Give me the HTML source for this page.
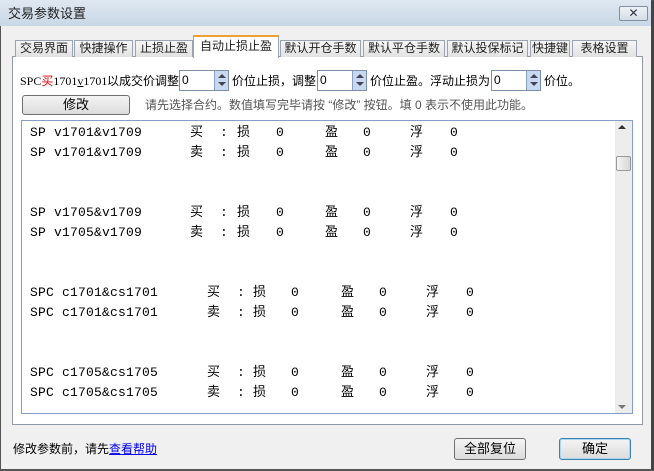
<!DOCTYPE html>
<html><head><meta charset="utf-8"><style>
*{margin:0;padding:0;box-sizing:border-box}
body{width:654px;height:471px;overflow:hidden;background:#f0f0f0;font-family:"Liberation Sans","Noto Sans CJK SC",sans-serif;font-size:12px;color:#000;position:relative}
.a{position:absolute;white-space:nowrap;line-height:16px}
.win{position:absolute;left:0;top:0;width:654px;height:471px;border:1px solid #555;border-right:3px solid #444;border-bottom:2px solid #555;background:#f0f0f0}
.title{position:absolute;left:0;top:0;width:651px;height:26px;background:linear-gradient(#dfe8f1,#c9d7e5)}
.tab{position:absolute;top:40px;height:17px;border:1px solid #9aa5b1;border-bottom:none;background:linear-gradient(#f6f6f6,#e2e2e2);font-size:12px;text-align:center;line-height:15px;color:#222;white-space:nowrap;overflow:hidden}
.panel{position:absolute;left:12px;top:56px;width:631px;height:369px;border:1px solid #8e9aa6;background:#fff}
.spin{position:absolute;top:70px;width:50px;height:21px;border:1px solid #7a8ea8;background:#fff;font-size:12px;line-height:19px;padding-left:2px}
.spin i{position:absolute;right:0;top:0;width:14px;height:19px;background:#c8d8f0;border-left:1px solid #8aa0c0}
.spin i:before{content:"";position:absolute;left:3px;top:3px;border:4px solid transparent;border-bottom:4px solid #445;border-top:none}
.spin i:after{content:"";position:absolute;left:3px;top:11px;border:4px solid transparent;border-top:4px solid #445;border-bottom:none}
.btn{position:absolute;border:1px solid #707070;border-radius:3px;background:linear-gradient(#f4f4f4,#dcdcdc);text-align:center;font-size:13px}
.m .a{font-family:"Liberation Mono","Noto Sans CJK SC",monospace;font-size:13px;letter-spacing:0.2px;line-height:16px;height:16px}
</style></head><body>
<div class="win"></div>
<div class="title"></div>
<div class="a" style="left:8px;top:6px;font-size:13px;color:#222">交易参数设置</div>
<div class="a" style="left:619px;top:6px;width:29px;height:15px;border:1px solid #7f8ea0;border-radius:2px;background:linear-gradient(#eef2f6,#d4dde7);text-align:center;font-size:12px;line-height:13px;color:#334">✕</div>

<div class="panel"></div>
<div class="tab" style="left:15px;width:58px">交易界面</div>
<div class="tab" style="left:74px;width:59px">快捷操作</div>
<div class="tab" style="left:135px;width:58px">止损止盈</div>
<div class="tab" style="left:280px;width:81px">默认开仓手数</div>
<div class="tab" style="left:363px;width:82px">默认平仓手数</div>
<div class="tab" style="left:447px;width:81px">默认投保标记</div>
<div class="tab" style="left:530px;width:40px">快捷键</div>
<div class="tab" style="left:572px;width:65px">表格设置</div>
<div class="tab" style="left:193px;top:35px;width:86px;height:23px;background:#fff;border-top:2px solid #f0a030;line-height:19px">自动止损止盈</div>

<div class="a" style="left:20px;top:73px;font-size:12px"><span style="font-family:'Liberation Serif',serif">SPC</span><span style="color:#e00000">买</span><span style="font-family:'Liberation Serif',serif">1701<u>v</u>1701</span></div>
<div class="a" style="left:107px;top:73px">以成交价调整</div>
<div class="spin" style="left:179px">0<i></i></div>
<div class="a" style="left:232px;top:73px">价位止损，调整</div>
<div class="spin" style="left:317px">0<i></i></div>
<div class="a" style="left:370px;top:73px">价位止盈。浮动止损为</div>
<div class="spin" style="left:491px">0<i></i></div>
<div class="a" style="left:544px;top:73px">价位。</div>
<div class="btn" style="left:22px;top:95px;width:108px;height:20px;line-height:18px">修改</div>
<div class="a" style="left:145px;top:97px;color:#555">请先选择合约。数值填写完毕请按 “修改” 按钮。填 0 表示不使用此功能。</div>

<div class="a" style="left:21px;top:120px;width:612px;height:294px;border:1px solid #84a0c4;background:#fff"></div>
<div class="a" style="left:615px;top:121px;width:17px;height:292px;background:#ededed"></div>
<div class="a" style="left:618px;top:125px;border:4px solid transparent;border-bottom:4px solid #333;border-top:none;height:0"></div>
<div class="a" style="left:618px;top:405px;border:4px solid transparent;border-top:4px solid #777;border-bottom:none;height:0"></div>
<div class="a" style="left:616px;top:156px;width:15px;height:15px;border:1px solid #999;border-radius:2px;background:linear-gradient(90deg,#f4f4f4,#d8d8d8)"></div>

<div class="m">
<div class="a" style="left:30px;top:125px">SP v1701&amp;v1709</div><div class="a" style="left:190px;top:125px">买</div><div class="a" style="left:220px;top:125px">:</div><div class="a" style="left:237px;top:125px">损</div><div class="a" style="left:276px;top:125px">0</div><div class="a" style="left:325px;top:125px">盈</div><div class="a" style="left:363px;top:125px">0</div><div class="a" style="left:410px;top:125px">浮</div><div class="a" style="left:450px;top:125px">0</div>
<div class="a" style="left:30px;top:145px">SP v1701&amp;v1709</div><div class="a" style="left:190px;top:145px">卖</div><div class="a" style="left:220px;top:145px">:</div><div class="a" style="left:237px;top:145px">损</div><div class="a" style="left:276px;top:145px">0</div><div class="a" style="left:325px;top:145px">盈</div><div class="a" style="left:363px;top:145px">0</div><div class="a" style="left:410px;top:145px">浮</div><div class="a" style="left:450px;top:145px">0</div>
<div class="a" style="left:30px;top:205px">SP v1705&amp;v1709</div><div class="a" style="left:190px;top:205px">买</div><div class="a" style="left:220px;top:205px">:</div><div class="a" style="left:237px;top:205px">损</div><div class="a" style="left:276px;top:205px">0</div><div class="a" style="left:325px;top:205px">盈</div><div class="a" style="left:363px;top:205px">0</div><div class="a" style="left:410px;top:205px">浮</div><div class="a" style="left:450px;top:205px">0</div>
<div class="a" style="left:30px;top:225px">SP v1705&amp;v1709</div><div class="a" style="left:190px;top:225px">卖</div><div class="a" style="left:220px;top:225px">:</div><div class="a" style="left:237px;top:225px">损</div><div class="a" style="left:276px;top:225px">0</div><div class="a" style="left:325px;top:225px">盈</div><div class="a" style="left:363px;top:225px">0</div><div class="a" style="left:410px;top:225px">浮</div><div class="a" style="left:450px;top:225px">0</div>
<div class="a" style="left:30px;top:285px">SPC c1701&amp;cs1701</div><div class="a" style="left:207px;top:285px">买</div><div class="a" style="left:237px;top:285px">:</div><div class="a" style="left:253px;top:285px">损</div><div class="a" style="left:291px;top:285px">0</div><div class="a" style="left:341px;top:285px">盈</div><div class="a" style="left:379px;top:285px">0</div><div class="a" style="left:426px;top:285px">浮</div><div class="a" style="left:466px;top:285px">0</div>
<div class="a" style="left:30px;top:305px">SPC c1701&amp;cs1701</div><div class="a" style="left:207px;top:305px">卖</div><div class="a" style="left:237px;top:305px">:</div><div class="a" style="left:253px;top:305px">损</div><div class="a" style="left:291px;top:305px">0</div><div class="a" style="left:341px;top:305px">盈</div><div class="a" style="left:379px;top:305px">0</div><div class="a" style="left:426px;top:305px">浮</div><div class="a" style="left:466px;top:305px">0</div>
<div class="a" style="left:30px;top:365px">SPC c1705&amp;cs1705</div><div class="a" style="left:207px;top:365px">买</div><div class="a" style="left:237px;top:365px">:</div><div class="a" style="left:253px;top:365px">损</div><div class="a" style="left:291px;top:365px">0</div><div class="a" style="left:341px;top:365px">盈</div><div class="a" style="left:379px;top:365px">0</div><div class="a" style="left:426px;top:365px">浮</div><div class="a" style="left:466px;top:365px">0</div>
<div class="a" style="left:30px;top:385px">SPC c1705&amp;cs1705</div><div class="a" style="left:207px;top:385px">卖</div><div class="a" style="left:237px;top:385px">:</div><div class="a" style="left:253px;top:385px">损</div><div class="a" style="left:291px;top:385px">0</div><div class="a" style="left:341px;top:385px">盈</div><div class="a" style="left:379px;top:385px">0</div><div class="a" style="left:426px;top:385px">浮</div><div class="a" style="left:466px;top:385px">0</div>
</div>

<div class="a" style="left:13px;top:441px">修改参数前，请先<span style="color:#0000ee;text-decoration:underline">查看帮助</span></div>
<div class="btn" style="left:454px;top:438px;width:72px;height:22px;line-height:20px">全部复位</div>
<div class="btn" style="left:559px;top:438px;width:72px;height:22px;line-height:20px;border-color:#3c7fb1;box-shadow:inset 0 0 0 1px #a8d8f0">确定</div>
</body></html>
